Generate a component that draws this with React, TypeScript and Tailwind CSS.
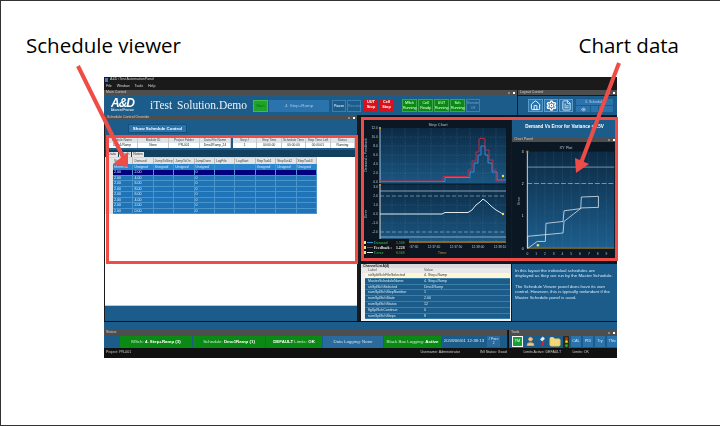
import { Home, Settings, FileText, Eye, Folder, User } from 'lucide-react'

const gridCols = ['Step', 'Demand', 'JumpToStep', 'JumpToOn', 'JumpDone', 'LogFile', 'LogStart', 'StepTask1', 'StepTask2', 'StepTask3']
const gridUnits = ['hh:mm:ss', 'Unsigned', 'Unsigned', 'Unsigned', 'Unsigned', '', '', 'Unsigned', 'Unsigned', 'Unsigned']
const gridRows = ['2.00', '4.00', '6.00', '8.00', '6.00', '4.00', '2.00', '0.00']

const channels = [
  ['strSplitSchFileSelected', '4. Step+Ramp'],
  ['MasterScheduleName', '4. Step+Ramp'],
  ['strSplSchSelected', 'Dmo1Ramp'],
  ['numSplSchStepNumber', '1'],
  ['numSplSchState', '2.00'],
  ['numSplSchStatus', '12'],
  ['flgSplSchContinue', '0'],
  ['numSplSchSteps', '8'],
]

function Info({ items, className }: { items: string[][]; className: string }) {
  return (
    <div className={`flex h-[10px] bg-white ${className}`}>
      {items.map(([head, value]) => (
        <div key={head} className="flex-1 min-w-0 border-r border-[#c8c8c8] text-center text-[3.2px] whitespace-nowrap">
          <div className="h-[5px] bg-[#dfe3e8] text-[#444] leading-[5px]">{head}</div>
          <div className="h-[5px] text-[#222] leading-[5px]">{value}</div>
        </div>
      ))}
    </div>
  )
}

function StatusLight({ top, bottom }: { top: string; bottom: string }) {
  return (
    <div className="w-[15px] h-[13px] bg-[#0a8a14] border border-[#3aa84a] text-white text-center text-[3.6px] leading-[5px] pt-px">
      <div>{top}</div>
      <div>{bottom}</div>
    </div>
  )
}

function Bar({ label }: { label: string }) {
  return (
    <div className="h-[5px] bg-[#4e4e4e] text-[#cfcfcf] text-[3.6px] leading-[5px] pl-[2px] flex justify-between pr-[2px]">
      <span>{label}</span>
      <span className="flex gap-[3px] items-center">
        <i className="w-[2px] h-[2px] bg-[#888]" />
        <i className="w-[2px] h-[2px] bg-white" />
      </span>
    </div>
  )
}

function StripChart() {
  const xs = [392, 405, 418, 431, 444, 457, 470, 483, 496]
  return (
    <svg viewBox="360 115 151 149" className="block w-[151px] h-[149px]" fontFamily="Liberation Sans, sans-serif">
      <defs>
        <linearGradient id="stripTop" x1="0" y1="0" x2="0" y2="1">
          <stop offset="0" stopColor="#0c2a44" />
          <stop offset="1" stopColor="#1a5782" />
        </linearGradient>
      </defs>
      <rect x="360" y="115" width="151" height="149" fill="#0b1722" />
      <text x="438" y="126" fontSize="4" fill="#a9c6dc" textAnchor="middle">Strip Chart</text>
      <rect x="380" y="128" width="126" height="55.5" fill="url(#stripTop)" />
      <rect x="380" y="184.5" width="126" height="57.5" fill="url(#stripTop)" />
      {xs.map(x => (
        <g key={x} stroke="#6f96b4" strokeWidth="0.4" strokeDasharray="1 1.5" opacity="0.7">
          <line x1={x} y1="128" x2={x} y2="183" />
          <line x1={x} y1="185" x2={x} y2="242" />
        </g>
      ))}
      {[137, 146, 155, 164, 173, 205, 223].map(y => (
        <line key={y} x1="380" y1={y} x2="506" y2={y} stroke="#6f96b4" strokeWidth="0.4" strokeDasharray="1 1.5" opacity="0.7" />
      ))}
      {[['12.0', 129], ['10.0', 138], ['8.0', 147], ['6.0', 156], ['4.0', 165], ['2.0', 174], ['0.0', 183], ['3.0', 188], ['2.0', 197], ['1.0', 206], ['0.0', 215], ['-1.0', 224], ['-2.0', 233]].map(([t, y]) => (
        <text key={`${t}${y}`} x="378" y={y} fontSize="3.4" fill="#a9c6dc" textAnchor="end">{t}</text>
      ))}
      <text transform="translate(367 155) rotate(-90)" fontSize="3.6" fill="#a9c6dc" textAnchor="middle">Demand + Feedback</text>
      <text transform="translate(367 214) rotate(-90)" fontSize="3.6" fill="#a9c6dc" textAnchor="middle">Error</text>
      <line x1="380" y1="128" x2="380" y2="183" stroke="#9cc4e0" strokeWidth="1" />
      <line x1="380" y1="185" x2="380" y2="242" stroke="#d8d8d8" strokeWidth="1" />
      <rect x="379" y="127" width="2" height="2" fill="#c98a20" />
      <rect x="379" y="184" width="2" height="2" fill="#c98a20" />
      <line x1="380" y1="191" x2="506" y2="191" stroke="#a8c0d2" strokeWidth="0.8" />
      <line x1="380" y1="196" x2="506" y2="196" stroke="#a8c0d2" strokeWidth="0.6" strokeDasharray="4 2" />
      <line x1="380" y1="232" x2="506" y2="232" stroke="#a8c0d2" strokeWidth="0.6" strokeDasharray="4 2" />
      <line x1="380" y1="237" x2="506" y2="237" stroke="#a8c0d2" strokeWidth="0.8" />
      <polyline fill="none" stroke="#2f8fe0" strokeWidth="1" points="380,181.5 445,181.5 445,177.5 470,177.5 470,172 474,172 474,163 478,163 478,155 481,155 481,146 485,146 485,155 488,155 488,163 492,163 492,172 497,172 497,180 506,180" />
      <polyline fill="none" stroke="#c02c48" strokeWidth="1" points="380,181 443,181 443,176.5 468,176.5 468,170 472,170 472,161 476,161 476,152 479,152 479,139 482,138 485,139 485,150 489,150 489,160 493,160 493,170 496,170 496,181 503,181" />
      <circle cx="503" cy="176" r="1.2" fill="#f2e24a" />
      <polyline fill="none" stroke="#e2e8ee" strokeWidth="1" points="380,214 442,214 445,212.5 468,212.5 472,210 476,205 480,202 483,199 487,202 491,206 496,210 503,214" />
      <circle cx="503" cy="214" r="1.2" fill="#f2e24a" />
      <rect x="380" y="241.5" width="126" height="1.2" fill="#c98a20" />
      {['12:37:30', '12:37:40', '12:37:50', '12:38:00', '12:38:10'].map((t, i) => (
        <text key={t} x={412 + i * 22} y="248" fontSize="3.2" fill="#a9c6dc" textAnchor="middle">{t}</text>
      ))}
      <text x="442" y="254" fontSize="4" fill="#c98a20" textAnchor="middle">Time</text>
      <rect x="363" y="239" width="46" height="16" fill="#101418" />
      {[['Demand', '1.500', '#2f8fe0', '#1f9a4a', 244], ['Feedback :', '1.228', '#c02c48', '#e8e8e8', 249], ['Error', '0.368', '#e2e8ee', '#1f9a4a', 254]].map(([name, value, line, color, y]) => (
        <g key={name as string}>
          <rect x="364" y={(y as number) - 3} width="2" height="3" fill="#efe08a" />
          <line x1="367" y1={(y as number) - 1.5} x2="373" y2={(y as number) - 1.5} stroke={line as string} strokeWidth="1" />
          <text x="374" y={y as number} fontSize="3.8" fontWeight="700" fill={color as string} fontFamily="Liberation Serif, serif">{name}</text>
          <text x="396" y={y as number} fontSize="3.8" fontWeight="700" fill={color as string} fontFamily="Liberation Serif, serif">{value}</text>
        </g>
      ))}
    </svg>
  )
}

function XYPlot() {
  const ticks = [0, 1, 2, 3, 4, 5, 6, 7, 8, 9]
  return (
    <svg viewBox="512 138 105 126" className="block w-[105px] h-[126px]" fontFamily="Liberation Sans, sans-serif">
      <defs>
        <linearGradient id="xyBg" x1="0" y1="0" x2="0" y2="1">
          <stop offset="0" stopColor="#0c2a44" />
          <stop offset="1" stopColor="#1d5f8e" />
        </linearGradient>
      </defs>
      <rect x="512" y="138" width="105" height="126" fill="#0b1722" />
      <text x="566" y="145" fontSize="4" fill="#a9c6dc" textAnchor="middle">XY Plot</text>
      <rect x="526" y="148" width="90" height="100" fill="url(#xyBg)" />
      {ticks.map(t => (
        <g key={t}>
          <line x1={526 + t * 9.1} y1="148" x2={526 + t * 9.1} y2="248" stroke="#6f96b4" strokeWidth="0.4" strokeDasharray="1 1.5" opacity="0.7" />
          <text x={526 + t * 9.1} y="255" fontSize="3.4" fill="#a9c6dc" textAnchor="middle">{t}</text>
        </g>
      ))}
      {[['3', 149.5], ['2', 182.5], ['1', 215.5], ['0', 249.5]].map(([t, y]) => (
        <text key={t} x="522" y={y} fontSize="3.4" fill="#d8e4ee" textAnchor="end">{t}</text>
      ))}
      <text transform="translate(518 199) rotate(-90)" fontSize="3.6" fill="#a9c6dc" textAnchor="middle">Error</text>
      <line x1="526" y1="164" x2="616" y2="164" stroke="#8fb0c6" strokeWidth="0.8" />
      <line x1="526" y1="181" x2="616" y2="181" stroke="#8fb0c6" strokeWidth="0.8" strokeDasharray="5 2" />
      <line x1="526" y1="148" x2="526" y2="248" stroke="#d8d8d8" strokeWidth="1" />
      <line x1="526" y1="248" x2="616" y2="248" stroke="#c98a20" strokeWidth="0.8" />
      <rect x="525" y="147" width="2" height="2" fill="#c98a20" />
      <polyline fill="none" stroke="#dfe8ee" strokeWidth="0.8" points="526.3,248.3 536.3,241 544.7,241 545.3,222.3 563,220.3 564,209.3 581.3,207 582,195 599.7,194.3 599.7,205.7 582,206.3 564,220.3 563,232.3 526.3,235.7 526.3,248.3" />
      <circle cx="537" cy="245" r="1.3" fill="#f2e24a" />
    </svg>
  )
}

export default function App() {
  return (
    <div className="relative w-[720px] h-[426px] overflow-hidden bg-white border-l border-t border-b border-[#333] font-['Liberation_Sans',sans-serif]">
      {/* Headings */}
      <div className="h-[76px] flex justify-between pl-[25px] pr-[41px] pt-[30px] font-['Open_Sans',sans-serif] text-[20.5px] leading-[28px] text-black">
        <span>Schedule viewer</span>
        <span>Chart data</span>
      </div>

      {/* App window */}
      <div className="ml-[103px] w-[513px] h-[281px] flex flex-col bg-[#1a1a1a] text-[3.6px] blur-[0.35px]">
        <div className="h-[6px] flex items-center gap-[2px] pl-[1px] text-[#cfcfcf] leading-none">
          <i className="w-[3px] h-[4px] bg-[#2f7fd0]" />
          A&amp;D iTest AutomationPanel
        </div>
        <div className="h-[7px] flex items-center gap-[5px] pl-[2px] text-[#d8d8d8] leading-none">
          <span>File</span><span>Window</span><span>Tools</span><span>Help</span>
        </div>

        {/* Main control */}
        <div className="h-[25px] flex gap-px">
          <div className="w-[413px] flex flex-col">
            <div className="h-[6px] bg-[#505050]"><Bar label="Main Control" /></div>
            <div className="flex-1 bg-[#1b5c8b] flex items-center pl-[3px]">
              <div className="w-[31px] h-[15px] text-white text-center leading-none">
                <div className="h-[11px] text-[12px] font-black italic tracking-[-1px] leading-[11px]">A&amp;D</div>
                <div className="text-[2.6px] leading-[3px] whitespace-nowrap">Advanced Precision</div>
              </div>
              <div className="ml-[12px] w-[103px] font-['Liberation_Serif',serif] text-[11.5px] text-[#eaf2f8] leading-none whitespace-nowrap [word-spacing:2px]">iTest Solution.Demo</div>
              <div className="w-[15px] h-[12px] bg-[#1fa32a] border border-[#3bc044] text-[#0b6a14] text-center text-[4px] leading-[10px]">Start</div>
              <div className="ml-px w-[60px] h-[12px] bg-[#2a73ad] text-[#a8c8e0] text-center text-[4.4px] leading-[12px]">4. Step+Ramp</div>
              <div className="ml-[3px] w-[14px] h-[12px] bg-[#1b5c8b] border border-[#3a7fb0] text-white text-center text-[3.6px] leading-[10px]">Pause</div>
              <div className="ml-px w-[14px] h-[12px] bg-[#1b5c8b] border border-[#3a7fb0] text-[#6f9cbc] text-center text-[3.6px] leading-[10px]">Resume</div>
              <div className="ml-[3px] w-[14px] h-[13px] bg-[#d8121c] text-white text-center text-[3.8px] font-bold leading-[5px] pt-px">UUT<br />Stop</div>
              <div className="ml-px w-[15px] h-[13px] bg-[#d8121c] text-white text-center text-[3.8px] font-bold leading-[5px] pt-px">Cell<br />Stop</div>
              <div className="ml-[8px] flex gap-px">
                <StatusLight top="MSch" bottom="Running" />
                <StatusLight top="Cell" bottom="Ready" />
                <StatusLight top="UUT" bottom="Running" />
                <StatusLight top="Sch" bottom="Running" />
                <div className="w-[14px] h-[13px] border border-[#3a7fb0] text-[#7fa6c2] text-center text-[3.4px] leading-[5px] pt-px">Remote<br />Off</div>
              </div>
            </div>
          </div>
          <div className="flex-1 flex flex-col">
            <Bar label="Layout Control" />
            <div className="h-px" />
            <div className="flex-1 bg-[#1b5c8b] flex items-center pl-[10px] gap-px">
              <div className="w-[15px] h-[13px] bg-[#2a73ad] border border-[#5a9cc8] flex items-center justify-center"><Home size={11} color="#fff" /></div>
              <div className="w-[14px] h-[13px] bg-[#2a73ad] border border-[#5a9cc8] flex items-center justify-center"><Settings size={11} color="#fff" strokeWidth={3} /></div>
              <div className="w-[14px] h-[13px] bg-[#2a73ad] border border-[#5a9cc8] flex items-center justify-center"><FileText size={11} color="#dfeaf2" /></div>
              <div className="ml-[2px] w-[37px] h-[13px] flex flex-col gap-px">
                <div className="h-[6px] bg-[#2a73ad] text-[#b8d2e6] text-center leading-[6px]">3. Schedule</div>
                <div className="h-[6px] flex gap-px">
                  <div className="w-[14px] bg-[#2a73ad] flex items-center justify-center"><Eye size={5} color="#fff" /></div>
                  <div className="w-[7px] bg-[#2a73ad]" />
                  <div className="flex-1 bg-[#2a73ad]" />
                </div>
              </div>
            </div>
          </div>
        </div>

        {/* Panels */}
        <div className="h-[207px] flex">
          <div className="w-[255px] flex flex-col pl-[1px] pr-[2px] border-b border-[#111]">
            <Bar label="Schedule Control Override" />
            <div className="h-[16px] bg-[#1b5c8b] pl-[23px] pt-[4px]">
              <div className="w-[59px] h-[9px] bg-[#2a73ad] border border-[#14507e] text-white text-center text-[4.4px] font-bold leading-[7px]">Show Schedule Control</div>
            </div>
            <div className="h-[14px] bg-[#1b5c8b] flex gap-[2px] px-[2px] pt-[2px]">
              <Info className="w-[124px]" items={[['Module Name', 'Dmo1/Ramp'], ['Module ID', 'None'], ['Project Folder', 'PR-001'], ['Data File Name', 'Dmo1Ramp_24']]} />
              <Info className="flex-1 min-w-0" items={[['Step #', '1'], ['Step Time', '00:00:00'], ['Schedule Time', '00:00:00'], ['Step Time Left', '00:00:01'], ['Status', 'Running']]} />
            </div>
            <div className="h-[7px] bg-[#14405f] flex items-end gap-px pl-[1px]">
              {['Data', 'Chart', 'Notes'].map(t => (
                <div key={t} className="w-[12px] h-[5px] bg-[#e6e6e6] text-[#333] text-center leading-[5px]">{t}</div>
              ))}
            </div>
            <div className="flex-1 bg-white">
              <div className="flex h-[7px] bg-[#e4e4e4] border-t border-[#e8d8a0] w-[212px]">
                <div className="w-[8px]" />
                {gridCols.map(c => (
                  <div key={c} className="w-[20.4px] border-r border-[#bbb] text-[#444] text-[3.2px] pl-[1px] leading-[6px] whitespace-nowrap">{c}</div>
                ))}
              </div>
              <div className="flex h-[6px] w-[212px]">
                <div className="w-[8px] bg-[#e4e4e4]" />
                {gridUnits.map((c, i) => (
                  <div key={i} className="w-[20.4px] bg-[#2a85cc] border-r border-[#4a94cc] text-[#d8ecfa] text-[3.2px] pl-[1px] leading-[6px] whitespace-nowrap">{c}</div>
                ))}
              </div>
              {gridRows.map((d, r) => (
                <div key={r} className="flex h-[5.5px] w-[212px]">
                  <div className="w-[8px] bg-[#e4e4e4]" />
                  {gridCols.map((c, i) => (
                    <div key={c} className={`w-[20.4px] border-r border-b border-[#4a94cc] text-[#e4f0fa] pl-[1px] leading-[5px] ${r === 0 ? 'bg-[#00007f]' : 'bg-[#1f74b8]'}`}>
                      {i === 0 ? '2.00' : i === 1 ? (r === 0 ? '2.00' : d) : i === 4 ? '0' : ''}
                    </div>
                  ))}
                </div>
              ))}
            </div>
            <div className="h-px bg-[#d8c890]" />
            <div className="h-[15px] bg-[#1b5c8b]" />
          </div>

          <div className="flex-1 flex flex-col">
            <div className="h-[149px] flex gap-px pl-px">
              <StripChart />
              <div className="w-[105px] bg-[#0b1722] flex flex-col">
                <div className="h-[18px] bg-[#1b5c8b] mt-[5px] text-white text-center text-[4.6px] font-bold leading-[13px]">Demand Vs Error for Variance &lt;0.5V</div>
                <Bar label="Chart Panel" />
                <XYPlot />
              </div>
            </div>
            <div className="h-[58px] flex bg-[#101820] border-b border-[#111]">
              <div className="w-[150px] ml-[2px] bg-[#f0f0f0] flex flex-col">
                <div className="h-[4px] bg-[#dadada] text-[#222] text-[3.4px] font-bold leading-[4px] pl-[2px]">ChannelListA(4)</div>
                <div className="flex h-[5px] bg-[#e8e8e8] text-[#555] leading-[5px] pl-[4px]">
                  <div className="w-[59px] pl-[3px]">Label</div>
                  <div>Value</div>
                </div>
                {channels.map(([label, value], i) => (
                  <div key={label} className={`flex ml-[4px] mr-[1px] h-[5.8px] leading-[5.5px] whitespace-nowrap border-b border-[#3a7fa8] ${i === 0 ? 'bg-[#fff6d8] text-[#333]' : 'bg-[#1b5c8b] text-[#d8e8f4]'}`}>
                    <div className="w-[59px] pl-[3px]">{label}</div>
                    <div>{value}</div>
                  </div>
                ))}
              </div>
              <div className="flex-1 ml-px bg-[#1b5c8b] text-[#d8e8f4] text-[4.4px] leading-[5.4px] px-[3px] pt-[4px]">
                <p>In this layout the individual schedules are displayed as they are run by the Master Schedule.</p>
                <p className="mt-[5px]">The Schedule Viewer panel does have its own control. However, this is typically redundant if the Master Schedule panel is used.</p>
              </div>
            </div>
          </div>
        </div>

        <div className="h-[8px] bg-[#1b5c8b]" />

        {/* Status */}
        <div className="h-[18px] flex">
          <div className="w-[403px] flex flex-col">
            <div className="h-[5px] bg-[#4e4e4e] text-[#cfcfcf] leading-[5px] pl-[2px]">Status</div>
            <div className="flex-1 bg-[#1b5c8b] flex items-center gap-px pl-[16px] text-[4.4px] text-[#cfe6cf]">
              <div className="w-[72px] h-[12px] bg-[#0a8a14] text-center leading-[12px]">MSch: <b className="text-white">4. Step+Ramp (3)</b></div>
              <div className="w-[72px] h-[12px] bg-[#0a8a14] text-center leading-[12px]">Schedule: <b className="text-white">Dmo1Ramp (1)</b></div>
              <div className="w-[56px] h-[12px] bg-[#0a8a14] text-center leading-[12px]"><b className="text-white">DEFAULT</b> Limits: <b className="text-white">OK</b></div>
              <div className="w-[60px] h-[12px] bg-[#2a6a9c] text-[#cfe0ee] text-center leading-[12px]">Data Logging: None</div>
              <div className="w-[57px] h-[12px] bg-[#0a8a14] text-center leading-[12px]">Black Box Logging: <b className="text-white">Active</b></div>
              <div className="w-[44px] text-[#d8e8f4] text-center whitespace-nowrap">2018/06/01 12:38:13</div>
              <div className="w-[13px] h-[11px] bg-[#2a6a9c] text-[#d8e8f4] text-center text-[3px] leading-[4px] pt-px"># Procs<br />2</div>
            </div>
          </div>
          <div className="flex-1 flex flex-col ml-[1px] border-l border-[#111]">
            <Bar label="Tools" />
            <div className="flex-1 bg-[#1b5c8b] flex items-center gap-[2px] pl-[3px] text-[#d8e8f4] text-[3.8px]">
              <div className="w-[11px] h-[11px] bg-[#18a038] border border-white text-white text-center leading-[9px]">TM</div>
              <User size={11} color="#f2a64a" fill="#f2c88a" />
              <div className="w-[9px] h-[11px] flex flex-col items-center justify-center"><i className="w-[3px] h-[4px] bg-[#e8e8e8] rotate-45" /><i className="w-[2px] h-[5px] bg-[#d82030] rotate-12" /></div>
              <Folder size={12} color="#f0c860" fill="#f4d878" />
              <div className="w-[6px] h-[12px] bg-[#2a2a1a] rounded-[1px] flex flex-col items-center justify-center gap-[0.5px]">
                <i className="w-[3px] h-[3px] rounded-full bg-[#e02020]" />
                <i className="w-[3px] h-[3px] rounded-full bg-[#e8c020]" />
                <i className="w-[3px] h-[3px] rounded-full bg-[#20b030]" />
              </div>
              {['CAL', 'PID', 'Try', 'TNo'].map(t => (
                <div key={t} className="w-[10px] h-[11px] bg-[#2a73ad] text-center leading-[11px]">{t}</div>
              ))}
            </div>
          </div>
        </div>

        <div className="flex-1 bg-[#111] flex items-center text-[#cfcfcf] text-[3.6px] pl-[2px]">
          <span>Project: PR-001</span>
          <span className="ml-[289px] w-[42px]">Username: Administrator</span>
          <span className="ml-[6px] w-[50px] text-center">INI Status: Good</span>
          <span className="w-[48px] text-center">Limits Active: DEFAULT</span>
          <span className="ml-[6px]">Limits: OK</span>
        </div>
      </div>

      {/* Annotations */}
      <div className="absolute left-[105px] top-[134px] w-[252px] h-[129px] border-[3px] border-[#ee4c46]" />
      <div className="absolute left-[360px] top-[116px] w-[257px] h-[144px] border-[3px] border-[#ee4c46]" />
      <svg className="absolute left-[-1px] top-[-1px]" width="720" height="426" viewBox="0 0 720 426">
        <line x1="78" y1="66" x2="123" y2="157" stroke="#ee4c46" strokeWidth="4" />
        <polygon points="128,167 113,164 128,152" fill="#ee4c46" />
        <line x1="619" y1="63" x2="581" y2="163" stroke="#ee4c46" strokeWidth="4" />
        <polygon points="576,173 575,158 589,164" fill="#ee4c46" />
      </svg>
    </div>
  )
}
